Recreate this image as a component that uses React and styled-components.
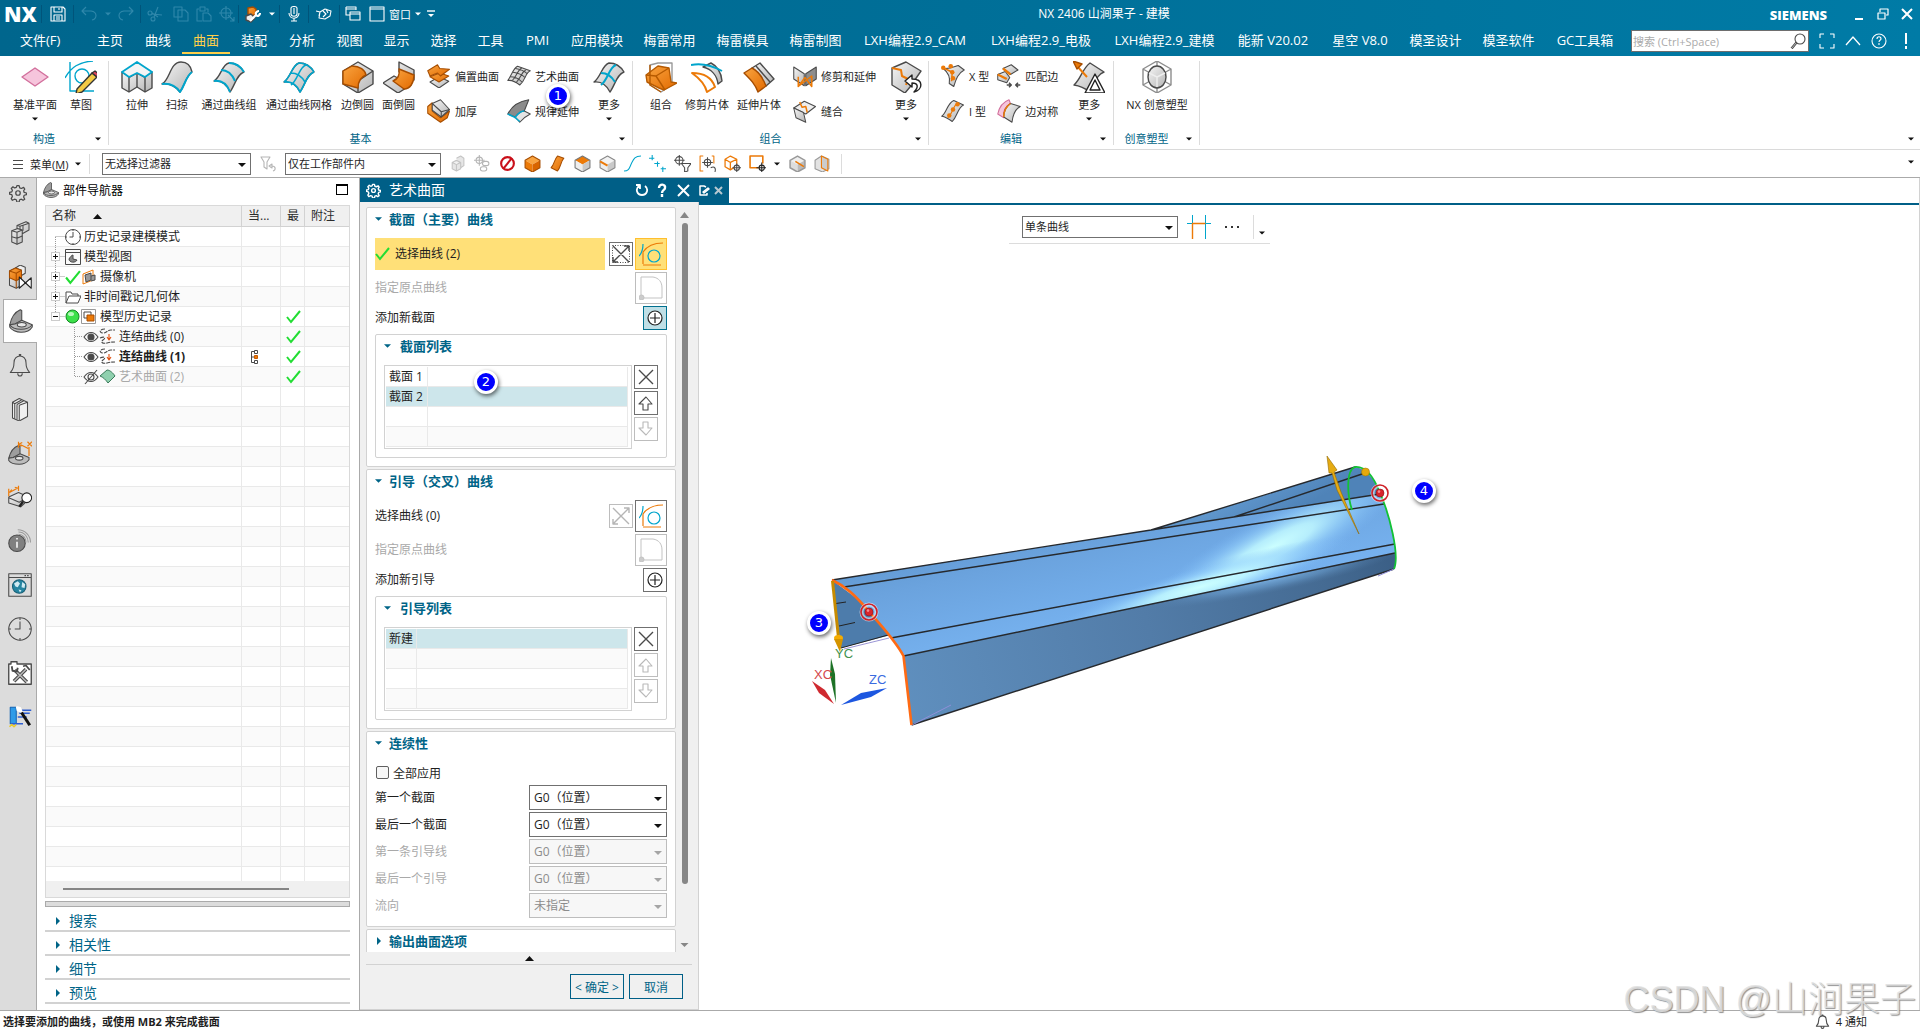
import React from "react";
import styled, { createGlobalStyle, css } from "styled-components";

const C = {
  teal: "#006487",
  titleBar: "#005f87",
  line: "#d2d2d2",
  grey: "#aaaaaa",
  panel: "#f0f0f0",
  text: "#1e1e1e",
  off: "#a9a9a9",
  yellow: "#ffe078",
  select: "#cde6eb",
};

const Global = createGlobalStyle`
  *, *::before, *::after { box-sizing: border-box; }
  body { margin: 0; background: #fff; }
  body, button, input, select, table {
    font-family: "Open Sans", "Noto Sans CJK SC", sans-serif;
    color: ${C.text};
  }
  button { background: none; border: 0; padding: 0; margin: 0; cursor: pointer; }
  svg { display: block; flex: none; }
`;

/* ---------- layout shells ---------- */
const Page = styled.div`
  position: relative;
  display: flex;
  flex-direction: column;
  height: 100vh;
  overflow: hidden;
  font-size: 12px;
`;
const Header = styled.header`
  flex: none;
  background: linear-gradient(90deg, #00668d, #006f98 50%, #007ba6);
  color: #fff;
`;
const TitleRow = styled.div`
  display: grid;
  grid-template-columns: 1fr auto 1fr;
  align-items: center;
  height: 28px;
`;
const QuickBar = styled.div`
  display: flex;
  align-items: center;
  padding-left: 4px;
  height: 26px;
`;
const Logo = styled.span`
  font-size: 21px;
  line-height: 26px;
  font-weight: 800;
  width: 37px;
`;
const QuickSep = styled.i`
  width: 1px;
  height: 18px;
  background: #00547a;
`;
const QuickBtn = styled.button`
  display: flex;
  align-items: center;
  justify-content: center;
  gap: 4px;
  width: ${(p) => p.$w || 23}px;
  height: 24px;
  font-size: 11px;
  white-space: nowrap;
  color: ${(p) => (p.disabled ? "#2f88ab" : "#fff")};
`;
const AppTitle = styled.h1`
  margin: 0;
  padding-left: 288px;
  font-size: 12px;
  font-weight: 400;
  line-height: 24px;
`;
const WindowBox = styled.div`
  display: flex;
  align-items: center;
  justify-content: flex-end;
  padding-right: 1px;
`;
const Brand = styled.span`
  font-size: 13px;
  font-weight: 800;
  line-height: 16px;
  margin: 2px 20px 0 0;
`;
const TabRow = styled.nav`
  display: flex;
  align-items: center;
  height: 28px;
`;
const Tab = styled.button`
  flex: none;
  width: ${(p) => p.$w}px;
  height: 28px;
  padding-bottom: 4px;
  font-size: 13px;
  line-height: 22px;
  color: ${(p) => (p.$active ? "#ffcf4a" : "#fff")};
  white-space: nowrap;
  &:first-child { padding-left: 20px; text-align: left; }
  ${(p) => p.$active && css`box-shadow: inset 0 -2px #006c95, inset 0 -4px #ffcf4a;`}
`;
const TabEnd = styled.div`
  display: flex;
  align-items: center;
  margin-left: auto;
  padding-bottom: 2px;
`;
const SearchBox = styled.label`
  display: flex;
  align-items: center;
  width: 178px;
  height: 22px;
  padding-right: 2px;
  background: #fff;
  border: 1px solid #6e6e6e;
  margin-right: 5px;
  input {
    flex: 1;
    min-width: 0;
    border: 0;
    padding: 0 0 0 1px;
    outline: none;
    background: none;
    font-size: 11px;
  }
  input::placeholder { color: #aaa; opacity: 1; }
`;

/* ---------- ribbon ---------- */
const Ribbon = styled.section`
  flex: none;
  display: flex;
  height: 94px;
  padding: 5px 0 4px;
  border-bottom: 1px solid #dadada;
  background: #fff;
`;
const Group = styled.div`
  flex: none;
  display: flex;
  flex-direction: column;
  width: ${(p) => p.$w}px;
  border-right: 1px solid #dcdcdc;
`;
const GroupBody = styled.div`
  display: flex;
  height: 72px;
  padding-left: ${(p) => p.$pad}px;
`;
const GroupFoot = styled.div`
  display: flex;
  align-items: center;
  height: 13px;
  font-size: 11px;
  line-height: 13px;
  color: ${C.teal};
  span { flex: 1; text-align: center; }
  button { width: 20px; display: flex; justify-content: center; }
`;
const BigBtn = styled.button`
  display: flex;
  flex-direction: column;
  align-items: center;
  flex: none;
  width: ${(p) => p.$w}px;
  font-size: 11px;
  white-space: nowrap;
  span { line-height: 16px; margin: 4px 0; }
`;
const SmallCols = styled.div`
  display: grid;
  grid-auto-flow: column;
  grid-template-rows: 32px 32px;
  gap: 3px 8px;
  padding: 0 8px;
`;
const SmallBtn = styled.button`
  display: flex;
  align-items: center;
  gap: 4px;
  padding-bottom: 2px;
  font-size: 11px;
  white-space: nowrap;
`;
const FarEdge = styled.button`
  display: flex;
  align-items: flex-end;
  margin-left: auto;
  padding: 0 6px 4px 0;
`;

/* ---------- selection bar ---------- */
const SelectBar = styled.section`
  flex: none;
  display: flex;
  align-items: center;
  height: 28px;
  padding-left: 13px;
  border-bottom: 1px solid ${C.grey};
  background: #fff;
`;
const MenuBtn = styled.button`
  display: flex;
  align-items: center;
  gap: 7px;
  width: 76px;
  height: 24px;
  font-size: 11px;
  white-space: nowrap;
`;
const VSep = styled.i`
  width: 1px;
  height: 20px;
  background: #dcdcdc;
  margin-right: ${(p) => p.$gap || 0}px;
`;
const FilterRow = styled.div`
  display: flex;
  align-items: center;
  padding: 0 8px 0 4px;
`;
const ToolBtn = styled.button`
  display: flex;
  align-items: center;
  justify-content: center;
  width: ${(p) => p.$w || 25}px;
  height: 24px;
`;
const SelectWrap = styled.span`
  position: relative;
  display: inline-flex;
  flex: none;
  width: ${(p) => p.$w}px;
  height: ${(p) => p.$h}px;
  select {
    appearance: none;
    width: 100%;
    height: 100%;
    margin: 0;
    padding: 0 16px 0 ${(p) => (p.$small ? 2 : 4)}px;
    border: 1px solid #707070;
    border-radius: 0;
    background: #fff;
    font-size: ${(p) => (p.$small ? 11 : 12)}px;
    color: ${C.text};
    opacity: 1;
  }
  select:disabled {
    border-color: #bdbdbd;
    background: #f7f7f7;
    color: #8c8c8c;
  }
  svg { position: absolute; right: 5px; top: 50%; margin-top: -1px; pointer-events: none; }
`;

/* ---------- work area ---------- */
const Work = styled.main`
  flex: 1;
  min-height: 0;
  display: flex;
`;
const Rail = styled.nav`
  flex: none;
  width: 37px;
  background: #dcdcdc;
  border-right: 1px solid ${C.grey};
`;
const RailBtn = styled.button`
  display: flex;
  align-items: center;
  justify-content: center;
  width: 36px;
  height: ${(p) => (p.$short ? 33 : 44)}px;
  padding: ${(p) => (p.$short ? "0 0 3px" : "0 0 0 3px")};
  ${(p) =>
    p.$active &&
    css`
      width: 34px;
      margin-left: 3px;
      padding: 0;
      background: #fff;
      border: 1px solid ${C.grey};
      border-right: 0;
    `}
`;
const Nav = styled.aside`
  flex: none;
  display: flex;
  flex-direction: column;
  width: 323px;
  padding: 0 9px 6px 8px;
  border-right: 1px solid ${C.grey};
  background: #fff;
`;
const NavTitle = styled.div`
  display: flex;
  align-items: center;
  height: 27px;
  margin-left: -2px;
  padding: 0 2px 4px 0;
  gap: 4px;
  h2 { margin: 0; font-size: 12px; font-weight: 400; flex: 1; color: #000; }
`;
const MaxBtn = styled.button`
  width: 12px;
  height: 11px;
  border: 1px solid #000;
  border-top-width: 2px;
`;
const TreeBox = styled.div`
  flex: 1;
  min-height: 0;
  display: flex;
  flex-direction: column;
  border: 1px solid #d9d9d9;
`;
const TreeClip = styled.div`
  flex: 1;
  min-height: 0;
  overflow: hidden;
`;
const Tree = styled.table`
  width: 100%;
  table-layout: fixed;
  border-collapse: separate;
  border-spacing: 0;
  font-size: 12px;
  th, td {
    height: 20px;
    padding: 0;
    border-right: 1px solid #e9e9e9;
    border-bottom: 1px solid #e9e9e9;
    font-weight: 400;
    text-align: left;
    white-space: nowrap;
    line-height: 18px;
    overflow: hidden;
  }
  th { height: 21px; background: ${C.panel}; border-color: ${C.line}; padding-left: 6px; color: #2b2b2b; }
  th:last-child, td:last-child { border-right: 0; }
  tbody tr:nth-child(even) { background: #fafafa; }
  td:nth-child(2) { padding-left: 8px; }
  td:nth-child(3) { padding-left: 5px; }
`;
const TreeCell = styled.div`
  display: flex;
  align-items: center;
  height: 19px;
  font-weight: ${(p) => (p.$bold ? 700 : 400)};
  color: ${(p) => (p.$off ? C.off : C.text)};
  span { padding-left: 3px; }
`;
const SortHead = styled.span`
  display: flex;
  align-items: center;
  gap: 17px;
`;
const HScroll = styled.div`
  flex: none;
  height: 16px;
  padding: 7px 60px 0 17px;
  background: ${C.panel};
  i { display: block; height: 2px; background: #868686; }
`;
const Splitter = styled.div`
  flex: none;
  height: 6px;
  margin: 3px 0 1px;
  background: #dcdcdc;
  border: 1px solid ${C.grey};
`;
const Fold = styled.button`
  flex: none;
  display: flex;
  align-items: center;
  gap: 8px;
  height: 24px;
  padding: 3px 0 0 9px;
  border-bottom: 2px solid ${C.line};
  font-size: 14px;
  line-height: 18px;
  color: ${C.teal};
`;

/* ---------- dialog ---------- */
const Dialog = styled.section`
  flex: none;
  display: flex;
  flex-direction: column;
  width: 339px;
  background: ${C.panel};
`;
const DialogBar = styled.div`
  flex: none;
  display: flex;
  align-items: center;
  height: 24px;
  padding: 0 5px 0 6px;
  background: ${C.titleBar};
  color: #fff;
  h2 { flex: 1; margin: 0; padding-left: 8px; font-size: 14px; font-weight: 400; line-height: 22px; }
`;
const DialogMain = styled.div`
  flex: 1;
  min-height: 0;
  display: flex;
  flex-direction: column;
  padding: 5px 6px 10px 6px;
  border-right: 1px solid ${C.line};
  border-bottom: 1px solid ${C.line};
`;
const ScrollArea = styled.div`
  flex: 1;
  min-height: 0;
  display: flex;
  gap: 1px;
`;
const Sections = styled.div`
  flex: 1;
  display: flex;
  flex-direction: column;
  gap: 2px;
  overflow: hidden;
`;
const Scrollbar = styled.div`
  width: 15px;
  display: flex;
  flex-direction: column;
  align-items: center;
  padding: 5px 0 5px;
`;
const Thumb = styled.i`
  flex: 1;
  width: 6px;
  margin: 5px 0 59px;
  border-radius: 3px;
  background: #868686;
`;
const Card = styled.div`
  flex: none;
  padding: 0 8px 8px;
  border: 1px solid ${C.line};
  border-radius: 2px;
  background: #fff;
`;
const SubCard = styled(Card)`
  margin-top: 4px;
`;
const CardHead = styled.h3`
  display: flex;
  align-items: center;
  gap: ${(p) => (p.$sub ? 9 : 7)}px;
  margin: 0 0 6px;
  padding-bottom: 3px;
  height: 24px;
  font-size: 13px;
  font-weight: 700;
  color: ${C.teal};
  svg { width: 7px; }
`;
const Line = styled.div`
  display: flex;
  align-items: center;
  gap: 2px;
  height: ${(p) => p.$h}px;
  margin-bottom: ${(p) => (p.$last ? 0 : 2)}px;
  color: ${(p) => (p.$off ? C.off : C.text)};
  & > label, & > span:first-child { flex: 1; padding-bottom: 2px; }
`;
const Picked = styled.span`
  display: flex;
  align-items: center;
  gap: 5px;
  height: 32px;
  margin-right: 2px;
  background: ${(p) => (p.$on ? C.yellow : "transparent")};
`;
const SquareBtn = styled.button`
  display: flex;
  align-items: center;
  justify-content: center;
  flex: none;
  width: ${(p) => p.$s}px;
  height: ${(p) => p.$s}px;
  border: 1px solid #707070;
  background: #fff;
  &:disabled { border-color: #bdbdbd; }
  ${(p) => p.$hot && css`border-color: #ffbf2e; background: ${C.yellow};`}
  ${(p) => p.$hover && css`border-color: #00708f; background: #bfdfe6;`}
`;
const ListRow = styled.div`
  display: flex;
  gap: 2px;
`;
const ListBox = styled.div`
  flex: 1;
  height: 84px;
  padding: 1px 3px 0 1px;
  border: 1px solid ${C.line};
`;
const List = styled.table`
  width: 100%;
  table-layout: fixed;
  border-collapse: separate;
  border-spacing: 0;
  font-size: 12px;
  td {
    height: 20px;
    padding: 0 0 0 3px;
    line-height: 19px;
    border-right: 1px solid #e9e9e9;
    border-bottom: 1px solid #e9e9e9;
    white-space: nowrap;
  }
  tr:nth-child(even) { background: #fafafa; }
  tr[aria-selected="true"] { background: ${C.select}; }
`;
const BtnCol = styled.div`
  display: flex;
  flex-direction: column;
  gap: 2px;
`;
const CheckLine = styled.label`
  display: flex;
  align-items: center;
  gap: 4px;
  height: 23px;
  padding: 0 0 2px 1px;
  input {
    appearance: none;
    width: 13px;
    height: 13px;
    margin: 0;
    border: 1px solid #606060;
    border-radius: 2px;
    background: #f7f7f7;
  }
`;
const Collapse = styled.button`
  display: flex;
  align-items: center;
  justify-content: center;
  flex: none;
  height: 13px;
  border-bottom: 1px solid ${C.line};
`;
const Actions = styled.div`
  flex: none;
  display: flex;
  justify-content: flex-end;
  gap: 5px;
  padding: 9px 9px 0 0;
`;
const ActionBtn = styled.button`
  width: 54px;
  height: 25px;
  border: 1px solid ${C.titleBar};
  font-size: 12px;
  color: ${C.teal};
  white-space: pre;
`;

/* ---------- graphics window ---------- */
const View = styled.section`
  flex: 1;
  min-width: 0;
  display: flex;
  flex-direction: column;
  position: relative;
  background: #fff;
  border-right: 1px solid ${C.line};
`;
const ViewTabs = styled.div`
  flex: none;
  height: 27px;
  border-bottom: 2px solid ${C.titleBar};
`;
const ViewTab = styled.div`
  display: flex;
  align-items: center;
  gap: 4px;
  width: 30px;
  height: 25px;
  background: ${C.titleBar};
`;
const ViewBar = styled.div`
  align-self: flex-start;
  display: flex;
  align-items: center;
  gap: 9px;
  width: 261px;
  height: 39px;
  margin-left: 310px;
  padding: 5px 0 0 13px;
  border-bottom: 1px solid #dcdcdc;
`;
const BarEnd = styled.button`
  display: flex;
  align-items: flex-end;
  height: 24px;
  padding: 0 0 4px 5px;
  border-left: 1px solid #dcdcdc;
`;
const Model = styled.svg`
  position: absolute;
  left: 91px;
  top: 262px;
  overflow: visible;
`;
const Badge = styled.span`
  position: absolute;
  left: ${(p) => p.$x}px;
  top: ${(p) => p.$y}px;
  display: flex;
  align-items: center;
  justify-content: center;
  width: 24px;
  height: 24px;
  border: 3px solid #fff;
  border-radius: 50%;
  background: #0000fe;
  color: #fff;
  font: 13px/18px "DejaVu Sans", sans-serif;
  box-shadow: 1px 2px 4px rgba(0, 0, 0, 0.6);
`;
const Status = styled.footer`
  flex: none;
  display: flex;
  align-items: center;
  justify-content: space-between;
  height: 22px;
  padding: 0 53px 1px 3px;
  border-top: 1px solid ${C.grey};
  font-size: 11px;
  background: #fff;
  strong { font-weight: 700; }
`;
const Notice = styled.button`
  display: flex;
  align-items: center;
  gap: 6px;
  font-size: 11px;
`;
const Watermark = styled.span`
  position: absolute;
  right: 4px;
  bottom: 12px;
  font: 300 36px/40px "Liberation Sans", "Noto Sans CJK SC", sans-serif;
  color: rgba(225, 225, 225, 0.85);
  text-shadow: 1px 1px 1px rgba(110, 110, 110, 0.75);
  pointer-events: none;
  white-space: nowrap;
`;

/* ---------- drawings ---------- */
const K = "#4a4a4a";
const O = "#ec7a08";
const T = "#00a5cc";
const G = "url(#grey)";
const OG = "url(#orange)";

const Hidden = styled.svg`
  position: absolute;
`;
const Defs = () => (
  <Hidden width="0" height="0" aria-hidden="true">
    <defs>
      <linearGradient id="grey" x1="0" y1="0" x2="1" y2="1">
        <stop offset="0" stopColor="#f6f6f6" />
        <stop offset="1" stopColor="#b4b4b4" />
      </linearGradient>
      <linearGradient id="orange" x1="0" y1="0" x2="1" y2="1">
        <stop offset="0" stopColor="#f9a440" />
        <stop offset="1" stopColor="#e26a00" />
      </linearGradient>
    </defs>
  </Hidden>
);
const Pic = ({ s = 24, v = 32, c = K, w = 1.4, children }) => (
  <svg width={s} height={s} viewBox={`0 0 ${v} ${v}`} fill="none" stroke={c} strokeWidth={w} strokeLinejoin="round" aria-hidden="true">
    {children}
  </svg>
);
const Caret = ({ c = "#111", w = 7 }) => (
  <svg width={w} height="4" viewBox="0 0 8 4" aria-hidden="true"><path d="M0 0h8L4 4z" fill={c} /></svg>
);
const Up = ({ c = "#111", w = 9, h = 5 }) => (
  <svg width={w} height={h} viewBox="0 0 8 5" preserveAspectRatio="none" aria-hidden="true"><path d="M0 5h8L4 0z" fill={c} /></svg>
);
const Right = () => (
  <svg width="7" height="8" viewBox="0 0 7 8" aria-hidden="true"><path d="M2 0v8l4-4z" fill={C.teal} /></svg>
);
const Check = ({ s = 15 }) => (
  <svg width={s} height={s} viewBox="0 0 15 15" aria-hidden="true"><path d="M1 8l4 5L14 2" fill="none" stroke="#22dd33" strokeWidth="2" /></svg>
);

const P = {
  plane: <path d="M3 16L16 7l13 9-13 9z" fill="#f6c5dc" stroke="#d2709c" />,
  sketch: (<>
    <path d="M5 1v29h24M0 17C6 6 14 1 28 0" stroke={T} /><circle cx="17" cy="15" r="7" stroke={T} />
    <path d="M12 28L27 12l5 4L17 31l-6 2z" fill="#f3ca45" stroke="#333" /><path d="M27 12l3-2 4 3-2 3z" fill="#e0455e" stroke="#333" /></>),
  extrude: (<>
    <path d="M1 11v16l7 4 8-5 8 5 7-4V11l-8 5-7-4-7 4z" fill={G} /><path d="M8 16v15M16 12v14M24 16v15" />
    <path d="M1 11L16 1l15 10-7 5-8-4-8 4z" stroke={T} fill="#f4f4f4" strokeWidth="1.8" /></>),
  sweep: (<><path d="M1 23C9 19 9 1 20 1c7 0 10 5 11 10-6 4-7 13-12 20-5-6-10-9-18-8z" fill={G} /><path d="M1 23c8-1 14 2 18 8 5-7 6-16 12-20" stroke={T} strokeWidth="2" /></>),
  thru: (<><path d="M1 20C8 16 9 3 16 2c8 0 12 4 15 9-7 2-9 13-14 20C14 24 9 19 1 20z" fill={G} /><path d="M1 20c8-1 13 3 16 11M8 9c7 0 11 4 14 11M16 2c8 0 12 4 15 9" stroke={T} strokeWidth="2" /></>),
  mesh: (<><path d="M1 21C8 16 9 4 16 2c8 0 12 4 15 9-7 2-9 13-14 20C14 25 9 20 1 21z" fill={G} /><path d="M1 21c8-1 13 3 16 10 5-7 7-18 14-20M8 12c6 0 11 4 14 9M16 2c8 0 12 4 15 9M16 2C9 4 8 16 1 21M8 24c7-5 8-18 15-20" stroke={T} strokeWidth="1.6" /></>),
  meshMore: (<><path d="M1 21C8 16 9 4 16 2c8 0 12 4 15 9-7 2-9 13-14 20C14 25 9 20 1 21z" fill={G} /><path d="M8 12c6 0 11 4 14 9M8 24c7-5 8-18 15-20" stroke={T} strokeWidth="2" /></>),
  blend: (<><path d="M1 10L16 1l15 9v13L16 32 1 23z" fill={G} /><path d="M16 32V20l15-10" /><path d="M1 10l9-5c8 0 13 4 14 9-5 2-8 6-8 13L1 23z" fill={OG} stroke="#a64d00" /></>),
  face: (<><path d="M0 22l11-7 17 9-13 8zM16 1v10l15 8V9z" fill={G} /><path d="M16 8l15 6c0 8-4 14-10 14l-11-8c5-2 7-6 6-12z" fill={OG} stroke="#a64d00" /></>),
  offset: (<><path d="M4 24l12-7 13 6-13 9z" fill={G} /><path d="M4 17l12 7 13-8-12-4z" fill={OG} stroke="#a64d00" /><path d="M1 9l13-8 3 5 13 1-12 9-4-4-10 4z" fill={OG} stroke="#a64d00" /></>),
  thicken: (<><path d="M1 10l6-5v11l11 9 12-9-3 9-9 6L1 19z" fill={OG} stroke="#a64d00" /><path d="M7 6l11-5 12 13-11 10-12-9z" fill={G} /><path d="M7 6l12 11 11-3M19 17v7" /></>),
  art: (<><path d="M1 22C7 14 8 6 14 3l17 6c-7 3-6 13-14 19C12 24 7 21 1 22z" fill={G} /><path d="M4 17c7 0 12 3 16 7M8 11c7 1 12 3 16 7M11 6c7 1 12 3 16 7M7 22c6-6 7-14 13-17M12 25c7-7 7-14 13-17" /></>),
  law: (<><path d="M1 20C7 8 16 3 29 1l-6 15c-5 1-9 6-12 8z" fill="#8b8b8b" /><path d="M11 24c4-5 8-8 12-8l8 4c-6 3-10 6-14 11z" fill="#e4e4e4" /><path d="M1 20c5 2 8 4 10 5l6 5M11 24c4-5 8-8 12-8" stroke={T} strokeWidth="2" /></>),
  combine: (<><path d="M5 4l8-2h14v22l-11 7-11-7z" stroke="#999" /><path d="M1 14l12-9 11 2 2 14 6 1-13 7-5-2-12-6z" fill={OG} stroke="#b65a00" /><path d="M1 14l10 1 13-8M11 15l9 14M5 4v20l11 7" stroke="#b65a00" /></>),
  trim: (<><path d="M12 6l8-4c6 3 10 8 11 18l-4 3C26 14 20 8 12 6z" fill={G} /><path d="M1 12c12 0 20 5 23 14l-8 5C14 23 8 17 1 12z" fill="#fff" stroke={O} strokeWidth="2" /><path d="M0 4c10-2 22 1 31 6" stroke={T} strokeWidth="2" /></>),
  extend: (<><path d="M9 7l8-5 14 16-8 7z" fill={G} /><path d="M13 5l14 16" /><path d="M1 12l8-5c6 3 11 10 14 18l-8 6C12 23 8 19 1 12z" fill={OG} stroke="#a64d00" /></>),
  trimext: (<><path d="M1 4l14 9v16L1 20z" fill={G} /><path d="M31 4L17 13v16l14-9z" fill="#8d8d8d" /><path d="M7 30l9-12 9 12V16L7 30V17" stroke={O} strokeWidth="2" /></>),
  sew: (<><path d="M1 12L15 3l15 7-13 10z" fill="#eee" /><path d="M1 12l13 6 3 13L4 25z" fill={G} /><path d="M9 4l3 7 5-1 2 8" stroke={O} strokeWidth="2" /></>),
  more2: (<><path d="M2 7L16 1l15 9-11 16-5 6L2 24z" fill={G} /><path d="M2 7l9 2 1 6 6 3-2 6" stroke={O} strokeWidth="2" /><path d="M22 14l-7 6 7 6v-4c6 0 7 4 2 9 9-2 10-13-2-13z" fill="#fff" stroke="#222" /></>),
  xform: (<><path d="M3 6c8 1 14-2 20-4l8 6c-8 4-11 12-14 22l-6-4C13 16 8 10 3 6z" fill={G} /><path d="M3 5l12 6-1 12" stroke={O} strokeWidth="2" /><g fill={O} stroke="none"><circle cx="3" cy="5" r="3" /><circle cx="15" cy="11" r="3" /><circle cx="13" cy="3" r="3" /><circle cx="16" cy="19" r="3" /></g></>),
  iform: (<><path d="M1 23C8 18 8 6 17 2l13 6c-8 4-8 15-15 22C11 27 7 24 1 23z" fill={G} /><path d="M9 25C16 20 15 9 23 5" stroke={O} /><g fill={O} stroke="none"><circle cx="11" cy="22" r="3" /><circle cx="16" cy="14" r="3" /><circle cx="22" cy="7" r="3" /></g></>),
  match: (<><path d="M8 6l11-5 9 7-10 6z" fill={G} /><path d="M1 14l10-4 6 8-4 7-12-4z" fill={G} /><path d="M8 6l10 8M1 14l12 6" stroke={O} strokeWidth="3" /><path d="M13 28h6M31 28h-6M16 25l3 3-3 3M28 25l-3 3 3 3" strokeWidth="2" /></>),
  sym: (<><path d="M1 20C3 10 8 4 16 1l2 5C10 10 8 17 9 25z" fill="#f6c5dc" stroke="#d2709c" /><path d="M9 24c0-8 3-14 9-18l13 4c-8 4-10 12-11 21z" fill={G} /><path d="M9 24c0-8 3-14 9-18" stroke={O} strokeWidth="2" /></>),
  more3: (<><path d="M1 24C8 18 9 8 17 2l14 9c-8 3-9 12-14 20C13 28 8 25 1 24z" fill={G} /><path d="M4 5l10 11" stroke={O} strokeWidth="2" /><path d="M0 0l9 3-5 5z" fill={O} stroke="#a64d00" /><path d="M12 32l10-19 10 19zM17 29l5-10 5 10z" fill="#fff" stroke="#222" /></>),
  shape: (<><path d="M16 0l14 8v16l-14 8L2 24V8zM16 0v32M2 8l28 16M30 8L2 24" stroke="#8d8d8d" /><ellipse cx="16" cy="16" rx="9" ry="11" fill={G} /><path d="M8 12l8 4 8-4M16 16v10" stroke="#eee" /></>),
  cubes: (<><path d="M5 13l8-3 6 2v16l-7 3-7-3zM12 6l12-5 4 2v9l-9 5v-5l-7-2z" fill={G} /><path d="M12 6l4 1 12-4M16 7v4M20 5v8M5 13l7 2 7-3M12 15v16M5 21l7 2 7-3" /></>),
  cubesO: (<><path d="M2 8l8-4 8 3v20l-7 4-9-4z" fill={G} /><path d="M10 4l6-4 7 3v8l-5 3V7z" fill="#eee" /><path d="M2 8l8-4 8 3v10l-7 4-9-4z" fill={OG} stroke="#a64d00" /><path d="M2 8l9 3 7-4M11 11v20" stroke="#a64d00" /><path d="M15 16v15l16-14v14z" fill="#fff" stroke="#222" /></>),
  part: (<><path d="M1 21C3 12 8 4 15 1l2 1v14L8 20z" fill="#9d9d9d" /><path d="M17 15l14 6v3c-3 5-9 7-15 7S3 28 1 24v-3l7-1z" fill="#bcbcbc" /><path d="M1 21c3 5 9 6 15 6s12-2 15-6" /><ellipse cx="17" cy="21" rx="6" ry="3" fill="#e8e8e8" /></>),
  bell: <path d="M3 26c4-4 5-7 5-13 0-6 4-9 8-9s8 3 8 9c0 6 1 9 5 13zM13 27c0 5 6 5 6 0M15 4V2h2v2" />,
  books: (<><path d="M6 7l9-5 11 5v19l-11 6-9-4z" fill="#f1f1f1" /><path d="M6 7l3 2v20M9 9l9-5M12 10v20M12 10l9-5M15 11v20M15 11l11-4" /></>),
  partDim: (<><path d="M1 23C3 15 8 8 14 6l2 1v11l-9 4z" fill="#9d9d9d" /><path d="M16 17l12 5v3c-3 4-7 6-13 6S3 29 1 26v-3l6-1z" fill="#bcbcbc" /><ellipse cx="15" cy="23" rx="5" ry="2.5" fill="#e8e8e8" /><path d="M14 1v8M28 20V8M15 4l12 6M15 4l4-2M15 4l3 3M26 1l6 6M32 1l-6 6" stroke={O} strokeWidth="1.6" /></>),
  measure: (<><path d="M1 16l13-6 16 7-13 12L1 24z" fill={G} /><path d="M1 17l14 6 9-5" /><path d="M1 15V5M14 8V1M2 10l11-6M2 10l3-4M13 4l-4-1" stroke={O} strokeWidth="1.6" /><circle cx="25" cy="17" r="6.5" fill="#fff" stroke="#222" /><path d="M20 22l-5 7" strokeWidth="3" stroke="#222" /></>),
  info: (<><circle cx="12" cy="19" r="11" fill="#808080" /><path d="M12 17v8M12 12v2" stroke="#fff" strokeWidth="2" /><path d="M14 4c8 0 13 7 13 14M13 1c10 0 17 8 17 17M14 7c6 0 10 5 10 11" stroke="#9a9a9a" /></>),
  web: (<><path d="M1 1h30v30H1zM1 6h30" /><path d="M22 3.5h7" strokeDasharray="2 1.5" /><circle cx="15" cy="18" r="9" fill="#2585a1" stroke="#175f76" /><path d="M8 14l5-3 3 3-3 5-3-1zM19 12l4 3-1 5-4-1zM14 22l4 1-2 3z" fill="#cfeaf2" stroke="none" /></>),
  clock: (<><circle cx="16" cy="16" r="15" /><path d="M16 1v3M16 28v3M1 16h3M28 16h3M16 6v10H9" /></>),
  tools: (<><path d="M1 4h3V1h8v3h19v27H1z" fill="#fff" strokeWidth="1.8" /><path d="M8 27L24 11M25 28L9 12" strokeWidth="5" /><path d="M8 27L24 11M25 28L9 12" stroke="#bbb" strokeWidth="2" /><path d="M5 7l1 6 6 1 1-5M20 7l4-1 5 6" strokeWidth="2.4" /></>),
  wand: (<><path d="M3 3h8v22H3z" fill="#2f9be8" stroke="#1565b5" /><path d="M13 7h18M15 11h14M13 16h12M4 25h16" stroke="#2f5fd0" strokeWidth="2" /><path d="M2 29l3-3 3 3 3-3" stroke="#e8c92c" strokeWidth="2" /><path d="M12 3l4 1 2 5-5-2z" fill="#fff" stroke="#fff" strokeWidth="3" /><path d="M18 10l11 17" stroke="#111" strokeWidth="4" /></>),
  gear: (<><circle cx="16" cy="16" r="4" /><path d="M14 3h4l1 4 3 1 4-2 2 3-2 3 1 3 4 1v3l-4 1-1 3 2 4-3 2-3-2-3 1-1 4h-4l-1-4-3-1-4 2-2-3 2-4-1-3-4-1v-3l4-1 1-3-2-3 3-3 3 2 3-1z" /></>),
};

const Small = {
  save: <path d="M1 1h12l2 2v12H1zM4 1v5h8V1M4 15V9h8v6M6 11h4M6 13h4M9 2v2" />,
  undo: <path d="M5 1L1 5l4 4M1 5h9c7 1 6 8 1 9" />,
  redo: <path d="M11 1l4 4-4 4M15 5H6c-7 1-6 8-1 9" />,
  cut: (<><circle cx="3" cy="7" r="2" /><circle cx="6" cy="13" r="2" /><path d="M5 8l10 1M7 11l4-10M5 7l6 4" /></>),
  copy: <path d="M1 1h8v10H1zM5 4h7l3 3v8H5z" />,
  paste: <path d="M3 3H1v12h5M10 3h2v3M4 1h5v4H4zM7 7h5l3 3v5H7z" />,
  target: (<><circle cx="7" cy="7" r="5" /><path d="M7 0v14M0 7h14M9 9l6 6M15 11v4h-4" /></>),
  mic: <path d="M5 2c0-2 6-2 6 0v6c0 3-6 3-6 0zM3 7c0 7 10 7 10 0M8 12v3M5 15h6M8 2v6" />,
  touch: <path d="M4 6l5-3 6 2-1 5-5 3-6-1zM0 5l4 1-1 4M7 5l3 3-3 3M10 3l2 4" />,
  cascade: <path d="M1 1h10v3M1 1v8h4M1 3h10M5 6h10v8H5zM5 8h10" />,
  window: <path d="M1 1h14v14H1zM1 3h14" />,
  mag: (<><circle cx="10" cy="6" r="5" /><path d="M6 9l-5 6M7 10l-5 6" /></>),
  full: <path d="M1 5V1h4M11 1h4v4M15 11v4h-4M5 15H1v-4" />,
  help: (<><circle cx="8" cy="8" r="7" /><path d="M6 6c0-3 4-3 4 0 0 1-2 1-2 3M8 10v2" /></>),
};
const Q = ({ n, s = 16, c = "currentColor", w = 1.1 }) => <Pic s={s} v={16} c={c} w={w}>{Small[n]}</Pic>;

const cube = (top, left, right, edge) => (
  <><path d="M1 5l7-4 7 4-7 4z" fill={top} /><path d="M1 5l7 4v7l-7-4z" fill={left} /><path d="M15 5L8 9v7l7-4z" fill={right} /><path d="M1 5l7-4 7 4v7l-7 4-7-4z" stroke={edge} /></>
);
const FILTERS = [
  ["组件", <><path d="M3 7l4-2 4 2v6l-4 2-4-2zM7 3l4-2 3 2v7l-3 2M3 7l4 2 4-2M7 9v6" fill="#e6e6e6" /></>, "#c4c4c4"],
  ["链接", <><circle cx="5" cy="5" r="3" /><path d="M5 0v10M0 5h10" /><rect x="8" y="6" width="6" height="4" rx="2" /><rect x="6" y="11" width="6" height="4" rx="2" /></>, "#b5b5b5"],
  ["清除", <><circle cx="8" cy="8" r="6" strokeWidth="2" /><path d="M12 3L4 13" strokeWidth="2" /></>, "#c9101a"],
  ["实体", cube("#f9a440", "#ec7a08", "#d96500", "#a64d00"), "none"],
  ["片体", <path d="M2 12C5 9 5 4 8 1l6 2c-3 3-3 9-6 12z" fill={OG} />, "#a64d00"],
  ["面", cube("#ec7a08", "#eee", "#c9c9c9", "#777"), "none"],
  ["边", <>{cube("#f2f2f2", "#eee", "#c9c9c9", "#888")}<path d="M1 6l7 4" stroke={O} strokeWidth="2" /></>, "none"],
  ["曲线", <path d="M0 15c5 0 5-3 7-7s3-7 9-7" />, T],
  ["点", <path d="M0 3h5M3 0v5M5 8h5M8 6v5M11 13h5M13 11v5" />, T],
  ["过滤", <><circle cx="5" cy="5" r="3.5" /><path d="M5 0v10M0 5h10M7 8h9l-3 4v3l-3 1v-4z" fill="#fff" /></>, K],
  ["捕捉", <><path d="M4 1H1v14h3M12 1h2v7" stroke={O} /><circle cx="8" cy="7" r="3" /><path d="M8 2v10M3 7h10M11 12c4-2 5 1 4 4" /></>, K],
  ["体素", <><path d="M1 4l5-3 6 3v6l-6 4-5-3zM1 4l5 3 6-3M6 7v6" stroke={O} strokeWidth="1.2" /><circle cx="12" cy="12" r="2.5" fill="#fff" /><path d="M12 8v8M8 12h8" /></>, K],
  ["矩形", <><path d="M9 12H1V1h12v7" stroke={O} strokeWidth="1.5" /><circle cx="12" cy="12" r="2.5" /><path d="M12 7v9M7 12h9" /></>, "#222"],
];

const PlusPic = () => <Pic s={18} v={18} c="#222" w={1.2}><circle cx="9" cy="9" r="7" fill="#fff" /><path d="M9 4v10M4 9h10" /></Pic>;
const CrossPic = () => <Pic s={18} v={18} w={1.4}><path d="M2 2l14 14M16 2L2 16" /></Pic>;
const ReversePic = ({ off }) => (
  <Pic s={20} v={20} c={off ? "#b5b5b5" : K}>{!off && <rect x="1.5" y="1.5" width="17" height="17" strokeDasharray="1 1.5" strokeWidth="1" />}<path d="M2 18L18 2M2 2l16 16M13 2h5v5M2 13v5h5" /></Pic>
);
const CurvePic = () => (
  <Pic s={24} v={24} w={1.2}><path d="M0 14c3-3 4-6 4-12" stroke={T} /><circle cx="15" cy="14" r="6" stroke={T} /><path d="M4 22V10C8 4 14 1 24 1M4 23h18" stroke={O} /></Pic>
);
const OriginPic = () => (
  <Pic s={24} v={24} c="#c3c3c3" w={1}><path d="M2 22V1h12c6 1 9 5 9 11v10z" /><circle cx="2.5" cy="21.5" r="2.5" fill="#ccc" /></Pic>
);
const ArrowPic = ({ down, off }) => (
  <Pic s={16} v={16} c={off ? "#b9b9b9" : K} w={1.1}><path d={down ? "M5 1h5v6h4L8 14 1 7h4z" : "M5 15h5V9h4L8 2 1 9h4z"} /></Pic>
);

/* ---------- composed controls ---------- */
const Choice = ({ id, label, value, w, h, small, disabled }) => (
  <SelectWrap $w={w} $h={h} $small={small}>
    <select id={id} aria-label={label} disabled={disabled} defaultValue={value}><option>{value}</option></select>
    <Caret c={disabled ? "#a5a5a5" : "#111"} w={8} />
  </SelectWrap>
);
const Big = ({ pic, label, w, drop }) => (
  <BigBtn $w={w}><Pic s={32}>{P[pic]}</Pic><span>{label}</span>{drop && <Caret w={6} />}</BigBtn>
);
const Mini = ({ pic, label }) => <SmallBtn><Pic s={24}>{P[pic]}</Pic>{label}</SmallBtn>;
const RibbonGroup = ({ name, w, pad = 8, children }) => (
  <Group $w={w}>
    <GroupBody $pad={pad}>{children}</GroupBody>
    <GroupFoot><span>{name}</span><button aria-label={`${name}选项`}><Caret w={6} /></button></GroupFoot>
  </Group>
);

const TABS = [
  ["文件(F)", 86], ["主页", 48], ["曲线", 48], ["曲面", 48], ["装配", 48], ["分析", 48], ["视图", 47], ["显示", 47], ["选择", 47], ["工具", 47],
  ["PMI", 47], ["应用模块", 72], ["梅雷常用", 73], ["梅雷模具", 73], ["梅雷制图", 73],
  ["LXH编程2.9_CAM", 126], ["LXH编程2.9_电极", 126], ["LXH编程2.9_建模", 121],
  ["能新 V20.02", 96], ["星空 V8.0", 78], ["模圣设计", 73], ["模圣软件", 73], ["GC工具箱", 80],
];

const RAIL = [
  ["装配导航器", "cubes"], ["约束导航器", "cubesO"], ["部件导航器", "part"], ["通知", "bell"], ["重用库", "books"],
  ["视图管理器", "partDim"], ["检查", "measure"], ["信息", "info"], ["网页浏览器", "web"], ["历史记录", "clock"], ["加工向导", "tools"], ["角色", "wand"],
];

/* ---------- tree ---------- */
const Branch = ({ sign, last, first }) => (
  <svg width="19" height="19" viewBox="0 0 19 19" aria-hidden="true">
    <path d={`M9.5 ${first ? 10 : 0}V${last ? 10 : 19}M9.5 9.5h9`} stroke="#999" strokeDasharray="1 1" fill="none" />
    {sign && <><rect x="5.5" y="5.5" width="8" height="8" fill="#fff" stroke="#ccc" /><path d={sign === "+" ? "M7 9.5h5M9.5 7v5" : "M7 9.5h5"} stroke="#111" /></>}
  </svg>
);
const SubBranch = ({ last }) => (
  <svg width="37" height="19" viewBox="0 0 37 19" aria-hidden="true">
    <path d={`M28.5 0V${last ? 10 : 19}M29 9.5h8`} stroke="#999" strokeDasharray="1 1" fill="none" />
  </svg>
);
const Eye = ({ off }) => (
  <Pic s={16} v={16} w={1.1}><path d="M1 8c4-6 10-6 14 0-4 6-10 6-14 0z" /><circle cx="8" cy="8" r="3" fill={off ? "none" : K} />{off && <path d="M2 15L14 1" />}</Pic>
);
const Joined = () => (
  <Pic s={17} v={17} w={1.1}><path d="M6 1C0 1 0 5 4 5s4-3 8-3h4" strokeDasharray="4 1" /><path d="M1 10c5-2 6 0 3 2s0 4 4 3 5-1 8-1" strokeDasharray="4 1" /><path d="M10 6v6M8 9l2 3 2-3" stroke="#e05010" /></Pic>
);
const Sheet = () => <Pic s={17} v={17} c="#3a7a5a" w={1}><path d="M1 8l7-6c3 0 6 3 8 6l-7 7C7 12 4 9 1 8z" fill="#8fd0ae" /></Pic>;

const ROWS = [
  { pre: <Branch first />, pic: <Pic s={16} w={2}>{P.clock}</Pic>, label: "历史记录建模模式" },
  { pre: <Branch sign="+" />, pic: <Pic s={16} v={16} w={1}><path d="M.5.5h15v15H.5zM0 3.5h16" /><path d="M4 10c1-2 3-4 4-4v4l4 1c-1 3-8 3-8-1z" fill="#888" /></Pic>, label: "模型视图" },
  { pre: <Branch sign="+" />, pic: <><Check s={16} /><Pic s={16} v={16} w={1}><path d="M2 5l10-4v10L2 15z" stroke={O} fill="#fff" /><path d="M4 6l6-2v7l-5 2zM10 7l4-1v5l-4 1" fill="#999" /></Pic></>, label: "摄像机" },
  { pre: <Branch sign="+" />, pic: <Pic s={16} v={16} w={1}><path d="M1 14V3h5l1 2h6v2M1 14L4 7h12l-3 7z" fill="#fff" /></Pic>, label: "非时间戳记几何体" },
  { pre: <Branch sign="-" last />, pic: <><Pic s={15} v={15} c="#118822" w={1}><circle cx="7.5" cy="7.5" r="6.5" fill="#3ce04a" /><ellipse cx="6" cy="5" rx="3" ry="2" fill="#b8f7bd" stroke="none" /></Pic><Pic s={17} v={17} w={1}><path d="M1.5 1.5h14v14h-14z" stroke="#999" /><rect x="4" y="4" width="7" height="6" fill="#fff" /><rect x="7" y="7" width="7" height="6" fill={O} stroke="#a64d00" /></Pic></>, label: "模型历史记录", ok: true },
  { pre: <SubBranch />, pic: <><Eye /><Joined /></>, label: "连结曲线 (0)", ok: true },
  { pre: <SubBranch />, pic: <><Eye /><Joined /></>, label: "连结曲线 (1)", ok: true, bold: true, now: true },
  { pre: <SubBranch last />, pic: <><Eye off /><Sheet /></>, label: "艺术曲面 (2)", ok: true, off: true },
  ...Array.from({ length: 25 }, () => ({})),
];

const Navigator = () => (
  <Nav>
    <NavTitle><Pic s={16} w={1.6}>{P.part}</Pic><h2>部件导航器</h2><MaxBtn aria-label="最大化" /></NavTitle>
    <TreeBox>
      <TreeClip>
        <Tree>
          <colgroup><col /><col width="39" /><col width="24" /><col width="44" /></colgroup>
          <thead><tr><th><SortHead>名称<Up /></SortHead></th><th>当...</th><th>最</th><th>附注</th></tr></thead>
          <tbody>
            {ROWS.map((r, i) => (
              <tr key={i}>
                <td>{r.label && <TreeCell $bold={r.bold} $off={r.off}>{r.pre}{r.pic}<span>{r.label}</span></TreeCell>}</td>
                <td>{r.now && <Pic s={14} v={14} w={1}><path d="M4 1.5H1.5v11H4M1.5 7H4" /><path d="M4.5.5h3v3h-3zM4.5 10.5h3v3h-3z" fill="#fff" /><path d="M4.5 5.5h3v3h-3z" fill={O} stroke="#c65a00" /></Pic>}</td>
                <td>{r.ok && <Check />}</td>
                <td />
              </tr>
            ))}
          </tbody>
        </Tree>
      </TreeClip>
      <HScroll><i /></HScroll>
    </TreeBox>
    <Splitter />
    {["搜索", "相关性", "细节", "预览"].map((t) => <Fold key={t}><Right />{t}</Fold>)}
  </Nav>
);

/* ---------- dialog parts ---------- */
const CurveSection = ({ title, count, picked, addLabel, listTitle, rows, selected, col }) => (
  <Card>
    <CardHead><Caret c={C.teal} />{title}</CardHead>
    <Line $h={32}>
      <Picked $on={picked}>{picked && <Check />}{`选择曲线 (${count})`}</Picked>
      <SquareBtn $s={24} disabled={!picked} aria-label="反向"><ReversePic off={!picked} /></SquareBtn>
      <SquareBtn $s={32} $hot={picked} aria-label="曲线"><CurvePic /></SquareBtn>
    </Line>
    <Line $h={32} $off><span>指定原点曲线</span><SquareBtn $s={32} disabled aria-label="原点曲线"><OriginPic /></SquareBtn></Line>
    <Line $h={24} $last><span>{addLabel}</span><SquareBtn $s={24} $hover={picked} aria-label={addLabel}><PlusPic /></SquareBtn></Line>
    <SubCard>
      <CardHead $sub><Caret c={C.teal} />{listTitle}</CardHead>
      <ListRow>
        <ListBox>
          <List>
            <colgroup><col width={col} /><col /></colgroup>
            <tbody>
              {[0, 1, 2, 3].map((i) => <tr key={i} aria-selected={i === selected}><td>{rows[i]}</td><td /></tr>)}
            </tbody>
          </List>
        </ListBox>
        <BtnCol>
          <SquareBtn $s={24} aria-label="移除"><CrossPic /></SquareBtn>
          <SquareBtn $s={24} disabled={!picked} aria-label="上移"><ArrowPic off={!picked} /></SquareBtn>
          <SquareBtn $s={24} disabled aria-label="下移"><ArrowPic down off /></SquareBtn>
        </BtnCol>
      </ListRow>
    </SubCard>
  </Card>
);

const CONTINUITY = [
  ["第一个截面", "G0（位置）"], ["最后一个截面", "G0（位置）"], ["第一条引导线", "G0（位置）", true], ["最后一个引导", "G0（位置）", true], ["流向", "未指定", true],
];

const SurfaceDialog = () => (
  <Dialog aria-label="艺术曲面">
    <DialogBar>
      <Pic s={15} c="#fff" w={3}>{P.gear}</Pic>
      <h2>艺术曲面</h2>
      <ToolBtn $w={20} aria-label="重置"><Pic s={14} v={14} c="#fff" w={1.8}><path d="M4 3C0 6 2 12 7 12s7-6 3-9M1 2h4v4" /></Pic></ToolBtn>
      <ToolBtn $w={20} aria-label="帮助"><Pic s={14} v={14} c="#fff" w={2.4}><path d="M4 5c0-5 7-4 6 0 0 2-3 2-3 5M7 11v3" /></Pic></ToolBtn>
      <ToolBtn $w={22} aria-label="关闭"><Pic s={13} v={13} c="#fff" w={2}><path d="M1 1l11 11M12 1L1 12" /></Pic></ToolBtn>
    </DialogBar>
    <DialogMain>
      <ScrollArea>
        <Sections>
          <CurveSection title="截面（主要）曲线" count={2} picked addLabel="添加新截面" listTitle="截面列表" rows={["截面 1", "截面 2"]} selected={1} col={42} />
          <CurveSection title="引导（交叉）曲线" count={0} addLabel="添加新引导" listTitle="引导列表" rows={["新建"]} selected={0} col={31} />
          <Card>
            <CardHead><Caret c={C.teal} />连续性</CardHead>
            <CheckLine><input type="checkbox" />全部应用</CheckLine>
            {CONTINUITY.map(([label, value, off], i) => (
              <Line key={label} $h={25} $off={off} $last={i === 4}>
                <label htmlFor={`cont${i}`}>{label}</label>
                <Choice id={`cont${i}`} value={value} w={138} h={25} disabled={off} />
              </Line>
            ))}
          </Card>
          <Card><CardHead><Right />输出曲面选项</CardHead></Card>
        </Sections>
        <Scrollbar><Up c="#868686" h={6} /><Thumb /><Caret c="#868686" w={9} /></Scrollbar>
      </ScrollArea>
      <Collapse aria-label="收起"><Up /></Collapse>
      <Actions><ActionBtn>&lt; 确定 &gt;</ActionBtn><ActionBtn>取消</ActionBtn></Actions>
    </DialogMain>
  </Dialog>
);

/* ---------- 3D model ---------- */
const Target = ({ x, y }) => (
  <g transform={`translate(${x} ${y})`}>
    <circle r="7.5" fill="none" stroke="#fff" strokeOpacity=".55" strokeWidth="4" />
    <circle r="8" fill="none" stroke="#cf2027" strokeWidth="1.6" />
    <circle r="4" fill="#d8242c" stroke="#8e1116" strokeWidth=".6" /><circle cx="-1" cy="-1.4" r="1.3" fill="#f58a8e" />
  </g>
);
const Surface = () => (
  <Model width="640" height="300" viewBox="0 0 640 300" role="img" aria-label="艺术曲面预览">
    <defs>
      <linearGradient id="top" gradientUnits="userSpaceOnUse" x1="300" y1="60" x2="330" y2="190">
        <stop offset="0" stopColor="#5f97cf" /><stop offset=".35" stopColor="#6ba3de" /><stop offset="1" stopColor="#78b4f2" />
      </linearGradient>
      <linearGradient id="side" gradientUnits="userSpaceOnUse" x1="110" y1="250" x2="605" y2="120">
        <stop offset="0" stopColor="#5f8fbe" /><stop offset=".5" stopColor="#527ca8" /><stop offset=".85" stopColor="#456b93" /><stop offset="1" stopColor="#3b5f86" />
      </linearGradient>
      <linearGradient id="back" gradientUnits="userSpaceOnUse" x1="470" y1="45" x2="490" y2="80">
        <stop offset="0" stopColor="#5f96cc" /><stop offset="1" stopColor="#4f83b8" />
      </linearGradient>
      <radialGradient id="shine">
        <stop offset="0" stopColor="#ccffff" /><stop offset=".3" stopColor="#bdf5ff" stopOpacity=".9" /><stop offset=".65" stopColor="#94d0fc" stopOpacity=".5" /><stop offset="1" stopColor="#7ab6f4" stopOpacity="0" />
      </radialGradient>
      <radialGradient id="glow">
        <stop offset="0" stopColor="#7db4e6" stopOpacity=".9" /><stop offset=".5" stopColor="#6ea4d6" stopOpacity=".5" /><stop offset="1" stopColor="#527ca8" stopOpacity="0" />
      </radialGradient>
      <clipPath id="topClip"><path d="M42 140L361 90 590 54C600 77 606 100 605 113L113.5 216Q80 160 42 140z" /></clipPath>
      <clipPath id="sideClip"><path d="M113.5 216L605 113Q607 122 604 129L121.6 285z" /></clipPath>
    </defs>
    <path d="M361 90L565 27C575 28 585 38 590 54L444 77z" fill="url(#back)" />
    <path d="M42 140l9 68 50-13-20-26z" fill="#4d7cab" />
    <path d="M51 208l47-13" stroke="#222" /><path d="M54 209l45-11" stroke="#9a95d6" />
    <path d="M46 163.5l10-1.5M49 186l16-3.5" stroke="#222" />
    <path d="M42 140L361 90 590 54C600 77 606 100 605 113L113.5 216C105 200 90 185 79 171 65 155 55 146 42 140z" fill="url(#top)" />
    <g clipPath="url(#topClip)">
      <ellipse rx="155" ry="34" transform="translate(482 108) rotate(-29)" fill="url(#shine)" />
      <ellipse rx="160" ry="20" transform="translate(410 147) rotate(-17)" fill="url(#shine)" />
    </g>
    <path d="M113.5 216L605 113Q607 122 604 129L121.6 285z" fill="url(#side)" />
    <g clipPath="url(#sideClip)">
      <ellipse rx="130" ry="14" transform="translate(480 139) rotate(-12)" fill="url(#glow)" />
    </g>
    <g fill="none" stroke="#26292d" strokeWidth="1.4">
      <path d="M42 140L361 90 590 54M361 90L565 27M444 77l131-44M54 147L594 64M101 198L605 104M113.5 216L605 113M121.6 285L604 129" />
    </g>
    <path d="M122 285l39-20M588 136l16-7" stroke="#8f8fd8" />
    <path d="M562 70C557 55 556 30 565 27c10-1 18 8 25 26 9 20 20 62 14 76" fill="none" stroke="#12c235" strokeWidth="1.8" />
    <path d="M42 140C55 146 65 155 79 171.5S105 200 113.5 216l8 69" fill="none" stroke="#ff6a13" strokeWidth="2.6" />
    <path d="M41 141l3 0 6 57-3 0z" fill="#c78b00" /><ellipse cx="48.5" cy="198" rx="4.5" ry="3" fill="#f5ac00" /><path d="M44 199h9l-3 13z" fill="#d49400" />
    <path d="M537 16l10 14-3 2 7 20 18 42-22-44-5-17-3 0z" fill="#e5ab13" stroke="#946a00" strokeWidth=".6" />
    <circle cx="575.5" cy="32" r="4" fill="#e7a90c" stroke="#9c7000" strokeWidth=".5" />
    <Target x={79} y={172} /><Target x={590} y={53} />
    <path d="M46 263l-6-28 1-17 4 16z" fill="#1d7226" /><path d="M44 264l-15-11-7-12 13 9z" fill="#cf2a30" /><path d="M51 265l20-12 26-5-16 9z" fill="#1d57e0" />
    <g fontFamily="Liberation Sans, sans-serif" fontSize="13">
      <text x="45" y="218" fill="#3f9350">YC</text><text x="24" y="239" fill="#d4484c">XC</text><text x="79" y="244" fill="#3a6be0">ZC</text>
    </g>
  </Model>
);

export default function App() {
  return (
    <Page>
      <Global />
      <Defs />
      <Header>
        <TitleRow>
          <QuickBar>
            <Logo>NX</Logo>
            <QuickSep />
            <QuickBtn $w={31} aria-label="保存"><Q n="save" /></QuickBtn>
            <QuickSep />
            <QuickBtn $w={29} disabled aria-label="撤销"><Q n="undo" /></QuickBtn>
            <QuickBtn $w={9} disabled aria-label="撤销列表"><Caret c="#2f88ab" w={6} /></QuickBtn>
            <QuickBtn $w={28} disabled aria-label="重做"><Q n="redo" /></QuickBtn>
            <QuickSep />
            <QuickBtn $w={28} disabled aria-label="剪切"><Q n="cut" /></QuickBtn>
            <QuickBtn disabled aria-label="复制"><Q n="copy" /></QuickBtn>
            <QuickBtn disabled aria-label="粘贴"><Q n="paste" /></QuickBtn>
            <QuickBtn disabled aria-label="选择目标"><Q n="target" /></QuickBtn>
            <QuickSep />
            <QuickBtn $w={26} aria-label="建模工具"><Pic s={17} v={17}><path d="M4 2l5-1 3 2v5l-4 2-4-2z" fill={OG} stroke="#a64d00" /><path d="M2 10l5-2 4 4-4 4-5-2z" fill="#eee" /><path d="M6 15l6-6c-1-3 2-4 3-4M12 9c2 2 4 0 4-2" stroke="#fff" strokeWidth="2.2" /></Pic></QuickBtn>
            <QuickBtn $w={14} aria-label="工具列表"><Caret c="#fff" w={6} /></QuickBtn>
            <QuickSep />
            <QuickBtn $w={28} aria-label="语音"><Q n="mic" /></QuickBtn>
            <QuickSep />
            <QuickBtn $w={30} aria-label="触控"><Q n="touch" /></QuickBtn>
            <QuickSep />
            <QuickBtn $w={26} aria-label="层叠窗口"><Q n="cascade" /></QuickBtn>
            <QuickBtn $w={58}><Q n="window" />窗口<Caret c="#fff" w={6} /></QuickBtn>
            <QuickBtn $w={14} aria-label="自定义"><Pic s={8} v={8} c="#fff"><path d="M0 1h8" /><path d="M1 4h6L4 7z" fill="#fff" stroke="none" /></Pic></QuickBtn>
          </QuickBar>
          <AppTitle>NX 2406 山涧果子 - 建模</AppTitle>
          <WindowBox>
            <Brand>SIEMENS</Brand>
            <QuickBtn $w={24} aria-label="最小化"><Pic s={12} v={12} c="#fff" w={2}><path d="M2 11h8" /></Pic></QuickBtn>
            <QuickBtn $w={24} aria-label="还原"><Pic s={12} v={12} c="#fff" w={1.2}><path d="M3 4V1h8v6H9M1 5h7v6H1z" /></Pic></QuickBtn>
            <QuickBtn $w={24} aria-label="关闭窗口"><Pic s={12} v={12} c="#fff" w={2}><path d="M1 1l10 10M11 1L1 11" /></Pic></QuickBtn>
          </WindowBox>
        </TitleRow>
        <TabRow>
          {TABS.map(([t, w]) => <Tab key={t} $w={w} $active={t === "曲面"}>{t}</Tab>)}
          <TabEnd>
            <SearchBox><input type="search" aria-label="搜索" placeholder="搜索 (Ctrl+Space)" /><Q n="mag" c={K} /></SearchBox>
            <QuickBtn $w={26} aria-label="全屏"><Q n="full" /></QuickBtn>
            <QuickBtn $w={26} aria-label="折叠功能区"><Pic s={16} v={16} c="#fff" w={1.3}><path d="M1 12l7-8 7 8" /></Pic></QuickBtn>
            <QuickBtn $w={26} aria-label="帮助文档"><Q n="help" /></QuickBtn>
            <QuickBtn $w={28} aria-label="提醒"><Pic s={16} v={16} c="#fff" w={2}><path d="M8 0v11M8 13v3" /></Pic></QuickBtn>
          </TabEnd>
        </TabRow>
      </Header>

      <Ribbon>
        <RibbonGroup name="构造" w={109}>
          <Big pic="plane" label="基准平面" w={54} drop /><Big pic="sketch" label="草图" w={38} />
        </RibbonGroup>
        <RibbonGroup name="基本" w={524}>
          <Big pic="extrude" label="拉伸" w={40} /><Big pic="sweep" label="扫掠" w={40} /><Big pic="thru" label="通过曲线组" w={64} />
          <Big pic="mesh" label="通过曲线网格" w={76} /><Big pic="blend" label="边倒圆" w={41} /><Big pic="face" label="面倒圆" w={41} />
          <SmallCols>
            <Mini pic="offset" label="偏置曲面" /><Mini pic="thicken" label="加厚" /><Mini pic="art" label="艺术曲面" /><Mini pic="law" label="规律延伸" />
          </SmallCols>
          <Big pic="meshMore" label="更多" w={44} drop />
        </RibbonGroup>
        <RibbonGroup name="组合" w={296}>
          <Big pic="combine" label="组合" w={40} /><Big pic="trim" label="修剪片体" w={52} /><Big pic="extend" label="延伸片体" w={52} />
          <SmallCols><Mini pic="trimext" label="修剪和延伸" /><Mini pic="sew" label="缝合" /></SmallCols>
          <Big pic="more2" label="更多" w={44} drop />
        </RibbonGroup>
        <RibbonGroup name="编辑" w={185} pad={4}>
          <SmallCols><Mini pic="xform" label="X 型" /><Mini pic="iform" label="I 型" /><Mini pic="match" label="匹配边" /><Mini pic="sym" label="边对称" /></SmallCols>
          <Big pic="more3" label="更多" w={46} drop />
        </RibbonGroup>
        <RibbonGroup name="创意塑型" w={86}><Big pic="shape" label="NX 创意塑型" w={70} /></RibbonGroup>
        <FarEdge aria-label="功能区选项"><Caret w={6} /></FarEdge>
      </Ribbon>

      <SelectBar>
        <MenuBtn><Pic s={10} v={10} w={1}><path d="M0 1.5h10M0 5.5h10M0 9.5h10" /></Pic><span>菜单(<u>M</u>)</span><Caret w={6} /></MenuBtn>
        <VSep $gap={12} />
        <Choice label="类型过滤器" value="无选择过滤器" w={149} h={22} small />
        <ToolBtn $w={34} aria-label="重置过滤器"><Pic s={16} v={16} c="#b5b5b5" w={1.1}><path d="M1 1h9L7 6v7l-3-2V6zM9 10l3-2v4zM12 10c4 0 4 4 1 5" /></Pic></ToolBtn>
        <Choice label="选择范围" value="仅在工作部件内" w={156} h={22} small />
        <FilterRow>
          {FILTERS.map(([name, pic, c]) => <ToolBtn key={name} aria-label={name}><Pic s={17} v={16} c={c} w={1}>{pic}</Pic></ToolBtn>)}
          <ToolBtn $w={14} aria-label="选择方式"><Caret w={6} /></ToolBtn>
          <ToolBtn $w={27} aria-label="截面"><Pic s={17} v={16} c="none">{cube("#eee", "#ddd", "#bbb", "#999")}<path d="M6 6l8 5" stroke={O} strokeWidth="1.5" /></Pic></ToolBtn>
          <ToolBtn $w={22} aria-label="剪切截面"><Pic s={17} v={16} c="#999" w={1}><path d="M1 5l6-4 7 3v9l-6 3-7-3z" fill="#e3e3e3" /><path d="M7 1v11l6 3V4z" stroke={O} fill="#ccc" /></Pic></ToolBtn>
        </FilterRow>
        <VSep />
        <FarEdge aria-label="选择条选项"><Caret w={6} /></FarEdge>
      </SelectBar>

      <Work>
        <Rail>
          <RailBtn $short aria-label="设置"><Pic s={18} w={2.2}>{P.gear}</Pic></RailBtn>
          {RAIL.map(([name, pic]) => <RailBtn key={name} $active={pic === "part"} aria-label={name}><Pic s={24}>{P[pic]}</Pic></RailBtn>)}
        </Rail>
        <Navigator />
        <SurfaceDialog />
        <View>
          <ViewTabs><ViewTab><Pic s={11} v={11} c="#fff" w={1.5}><path d="M7 2L5 1H1v9h7V8M4 7l5-4 1 1-5 4z" /></Pic><Pic s={9} v={9} c="#b7c8d0" w={2}><path d="M1 1l7 7M8 1L1 8" /></Pic></ViewTab></ViewTabs>
          <ViewBar>
            <Choice label="曲线规则" value="单条曲线" w={156} h={22} small />
            <Pic s={24} v={24} w={1}><path d="M0 8.5h24M5.5 0v24M18.5 0v24" stroke={T} /><path d="M5.5 24V8.5h13" stroke={O} strokeWidth="1.4" /></Pic>
            <ToolBtn $w={24} aria-label="更多选项"><Pic s={16} v={16} c="none"><path d="M1 7h2v2H1zM7 7h2v2H7zM13 7h2v2h-2z" fill="#333" /></Pic></ToolBtn>
            <BarEnd aria-label="工具条选项"><Caret w={6} /></BarEnd>
          </ViewBar>
          <Surface />
          <Badge $x={108} $y={433}>3</Badge>
          <Badge $x={713} $y={301}>4</Badge>
        </View>
      </Work>

      <Status>
        <strong>选择要添加的曲线，或使用 MB2 来完成截面</strong>
        <Notice><Pic s={15} w={2.4}>{P.bell}</Pic>4 通知</Notice>
      </Status>
      <Badge $x={546} $y={84}>1</Badge>
      <Badge $x={474} $y={370}>2</Badge>
      <Watermark>CSDN @山涧果子</Watermark>
    </Page>
  );
}
